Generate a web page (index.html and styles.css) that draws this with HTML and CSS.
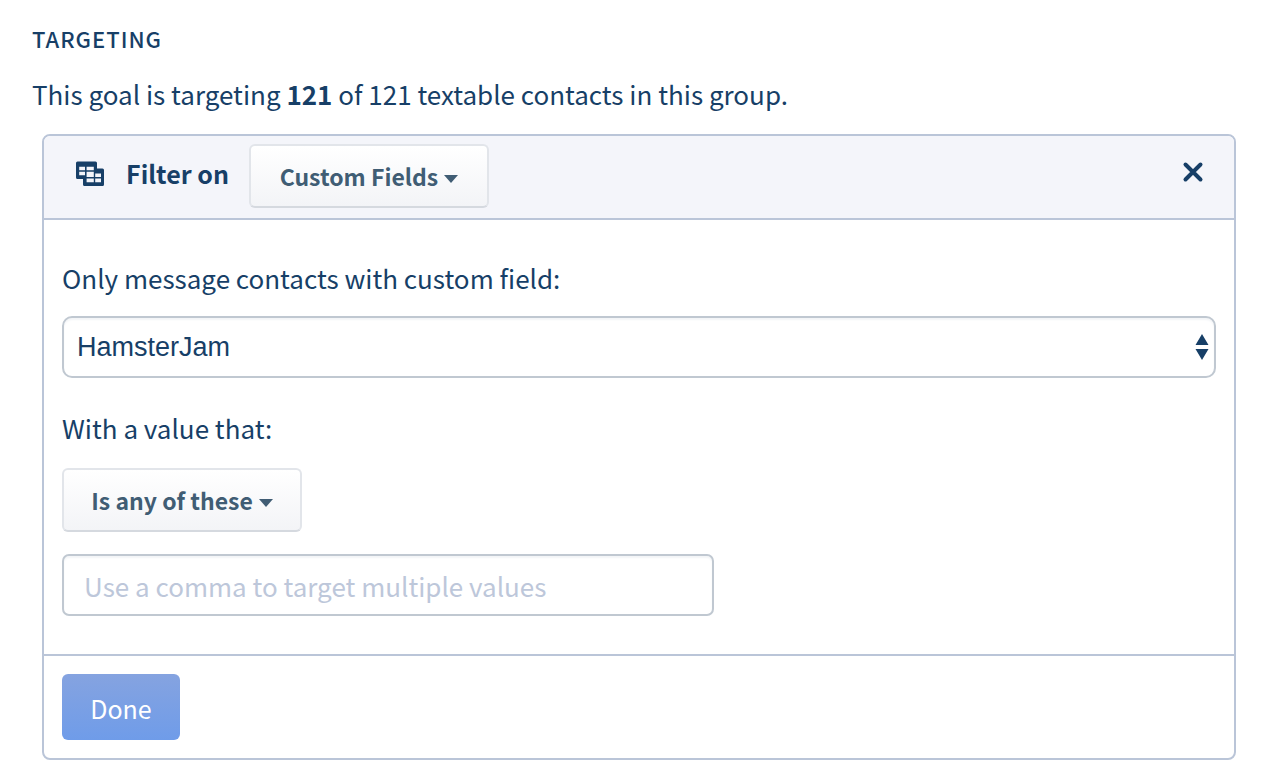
FILE: index.html
```html
<!DOCTYPE html>
<html lang="en">
<head>
<meta charset="utf-8">
<meta name="viewport" content="width=device-width, initial-scale=1">
<title>Targeting</title>
<link rel="stylesheet" href="styles.css">
</head>
<body>
<main class="page">
  <h2 class="section-title">TARGETING</h2>
  <p class="summary">This goal is targeting <strong>121</strong> of 121 textable contacts in this group.</p>

  <section class="filter-card">
    <header class="filter-header">
      <svg class="filter-icon" viewBox="0 0 28 26" aria-hidden="true">
        <path fill="currentColor" fill-rule="evenodd" d="M1.5 .5H19.5Q21 .5 21 2V7.5H26.5Q28 7.5 28 9V23.5Q28 25 26.5 25H8.5Q7 25 7 23.5V18H1.5Q0 18 0 16.5V2Q0 .5 1.5 .5ZM3.2 5.8V9.2H9V5.8ZM10.6 5.8V9.2H17.8V5.8ZM3.2 10.8V14.2H9V10.8ZM10.6 10.8V16H17.8V10.8ZM19.2 12.6V16H25V12.6ZM10.6 17.6V21.2H17.8V17.6ZM19.2 17.6V21.2H25V17.6Z"/>
      </svg>
      <span class="filter-label">Filter on</span>
      <button class="dropdown-button" type="button">Custom Fields<span class="caret"></span></button>
      <button class="close-button" type="button" aria-label="Remove filter">
        <svg class="close-icon" viewBox="0 0 22 22" aria-hidden="true"><path d="M3.5 3.5L18.5 18.5M18.5 3.5L3.5 18.5"/></svg>
      </button>
    </header>

    <div class="filter-body">
      <label class="field-label" for="custom-field">Only message contacts with custom field:</label>
      <div class="select-box">
        <select class="select" id="custom-field"><option>HamsterJam</option></select>
        <svg class="select-arrows" viewBox="0 0 14 26" aria-hidden="true"><path fill="currentColor" d="M7 0L13.5 11H.5ZM.5 15H13.5L7 26Z"/></svg>
      </div>
      <label class="field-label" for="values">With a value that:</label>
      <button class="dropdown-button" type="button">Is any of these<span class="caret"></span></button>
      <input class="text-input" id="values" type="text" placeholder="Use a comma to target multiple values">
    </div>

    <footer class="filter-footer">
      <button class="done-button" type="button">Done</button>
    </footer>
  </section>
</main>
</body>
</html>
```
FILE: styles.css
```css
* {
  box-sizing: border-box;
}

body {
  margin: 0;
  background: #fff;
  color: #173f67;
  font: 26px/36px "Noto Sans CJK SC", "Noto Sans", sans-serif;
}

button,
input {
  font: inherit;
}

.page {
  padding: 22px 32px 20px;
}

.section-title {
  margin: 0 0 22px;
  font-size: 22px;
  line-height: 32px;
  font-weight: 500;
  letter-spacing: 1px;
}

.summary {
  margin: 0 0 22px;
}

.filter-card {
  margin-left: 10px;
  border: 2px solid #bac5d8;
  border-radius: 8px;
  overflow: hidden;
}

.filter-header {
  display: flex;
  align-items: center;
  padding: 8px 30px 10px 32px;
  border-bottom: 2px solid #bac5d8;
  background: #f4f5fa;
}

.filter-icon {
  width: 28px;
  height: 26px;
  margin: 0 22px 4px 0;
}

.filter-label {
  margin: 0 20px 6px 0;
  font-size: 25px;
  font-weight: 700;
}

.dropdown-button {
  display: flex;
  align-items: center;
  justify-content: center;
  gap: 6px;
  width: 240px;
  height: 64px;
  padding: 0;
  border: 2px solid #e2e5ea;
  border-bottom-color: #d5d9df;
  border-radius: 6px;
  background: linear-gradient(#fff, #f3f4f7);
  color: #405d74;
  font-size: 23px;
  font-weight: 700;
  white-space: nowrap;
}

.caret {
  margin-top: 6px;
  border: 7px solid transparent;
  border-top: 8px solid currentColor;
  border-bottom: 0;
}

.close-button {
  display: flex;
  margin: 0 0 8px auto;
  padding: 0;
  border: 0;
  background: none;
  color: inherit;
}

.close-icon {
  width: 22px;
  height: 22px;
  fill: none;
  stroke: currentColor;
  stroke-width: 4;
  stroke-linecap: round;
}

.filter-body {
  padding: 40px 18px 38px;
}

.field-label {
  display: block;
  margin-bottom: 20px;
}

.select-box {
  position: relative;
  margin-bottom: 32px;
}

.select-box + .field-label {
  margin-bottom: 22px;
}

.select {
  display: block;
  width: 100%;
  height: 62px;
  padding: 0 40px 0 13px;
  border: 2px solid #c0c8d1;
  border-radius: 10px;
  appearance: none;
  background: #fff;
  box-shadow: inset 0 2px 2px #f3f5f7;
  color: inherit;
  font: 27px "Liberation Sans", Arial, sans-serif;
}

.select-arrows {
  position: absolute;
  top: 18px;
  right: 7px;
  width: 14px;
  height: 26px;
  pointer-events: none;
}

.text-input {
  display: block;
  width: 100%;
  max-width: 652px;
  height: 62px;
  margin-top: 22px;
  padding: 0 20px;
  border: 2px solid #c0c8d1;
  border-radius: 7px;
  box-shadow: inset 0 2px 2px #f3f5f7;
  color: inherit;
}

.text-input::placeholder {
  color: #bdc7da;
  opacity: 1;
}

.filter-footer {
  padding: 18px;
  border-top: 2px solid #bac5d8;
}

.done-button {
  display: block;
  width: 118px;
  height: 66px;
  padding: 2px 0 0;
  border: 0;
  border-radius: 6px;
  background: linear-gradient(#85a3e0, #6f9ce9);
  color: #fff;
  font-size: 25px;
}
```
